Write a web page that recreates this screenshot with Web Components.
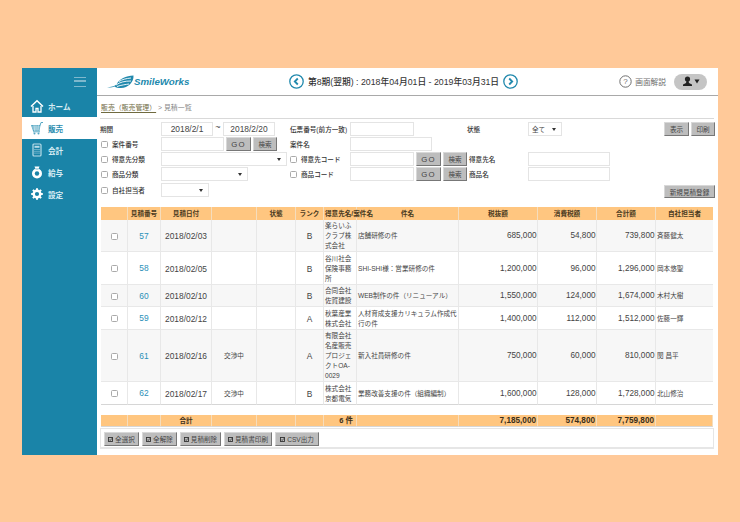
<!DOCTYPE html>
<html lang="ja"><head><meta charset="utf-8"><title>見積一覧</title>
<style>
html,body{margin:0;padding:0;height:522px;overflow:hidden;background:#ffc999;font-family:"Liberation Sans","Noto Sans CJK JP",sans-serif;color:#444}
</style></head><body>
<sw-app>
  <sw-nav slot="nav">
    <sw-nav-item icon="home">ホーム</sw-nav-item>
    <sw-nav-item icon="cart" active>販売</sw-nav-item>
    <sw-nav-item icon="calc">会計</sw-nav-item>
    <sw-nav-item icon="bag">給与</sw-nav-item>
    <sw-nav-item icon="gear">設定</sw-nav-item>
  </sw-nav>
  <sw-topbar></sw-topbar>
  <sw-crumb></sw-crumb>
  <sw-filter>
    <sw-lab>期間</sw-lab>
    <sw-group><sw-field w="52" center>2018/2/1</sw-field><span style="width:6px;text-align:center;font-size:9px">~</span><sw-field w="52" center>2018/2/20</sw-field></sw-group>
    <sw-lab style="padding-left:1px">伝票番号(前方一致)</sw-lab>
    <sw-field w="64"></sw-field>
    <sw-lab style="padding-left:0">状態</sw-lab>
    <sw-select w="34">全て</sw-select>
    <sw-group style="grid-column:7"><sw-btn w="25">表示</sw-btn><sw-btn w="24">印刷</sw-btn></sw-group>

    <sw-lab check>案件番号</sw-lab>
    <sw-group><sw-field w="63"></sw-field><sw-btn w="25" go>GO</sw-btn><sw-btn w="24">検索</sw-btn></sw-group>
    <sw-lab style="padding-left:1px">案件名</sw-lab>
    <sw-field w="82" style="grid-column:4/span 2"></sw-field>
    <div style="grid-column:6/span 2"></div>

    <sw-lab check>得意先分類</sw-lab>
    <sw-select w="126"></sw-select>
    <sw-lab check>得意先コード</sw-lab>
    <sw-group><sw-field w="64"></sw-field><sw-btn w="25" go>GO</sw-btn><sw-btn w="24">検索</sw-btn></sw-group>
    <sw-lab style="padding-left:2px">得意先名</sw-lab>
    <sw-field w="82"></sw-field>
    <div></div>

    <sw-lab check>商品分類</sw-lab>
    <sw-select w="87"></sw-select>
    <sw-lab check>商品コード</sw-lab>
    <sw-group><sw-field w="64"></sw-field><sw-btn w="25" go>GO</sw-btn><sw-btn w="24">検索</sw-btn></sw-group>
    <sw-lab style="padding-left:2px">商品名</sw-lab>
    <sw-field w="82"></sw-field>
    <div></div>

    <sw-lab check>自社担当者</sw-lab>
    <sw-select w="48"></sw-select>
    <sw-btn w="51" style="grid-column:7;margin-top:2px;height:13px">新規見積登録</sw-btn>
  </sw-filter>
  <sw-table></sw-table>
  <sw-actions>
    <sw-btn w="35" tick>全選択</sw-btn>
    <sw-btn w="35" tick>全解除</sw-btn>
    <sw-btn w="41" tick>見積削除</sw-btn>
    <sw-btn w="48" tick>見積書印刷</sw-btn>
    <sw-btn w="44" tick>CSV出力</sw-btn>
  </sw-actions>
</sw-app>
<script>
const ICONS={
home:'<path d="M1 7.500 7 1.800l6 5.700" fill="none" stroke="#fff" stroke-width="1.500"/><path d="M3 7v6h3V9.500h2V13h3V7" fill="none" stroke="#fff" stroke-width="1.300"/>',
cart:'<path d="M1 4h9.500l-1 6H3z" fill="#57a8c4"/><path d="M2 6h8M2.600 8h7M4 4l.6 6M6 4v6M8.300 4l-.4 6" stroke="#fff" stroke-width=".5"/><path d="M10 4.500 11 1.500h2M3 10.800h7" stroke="#57a8c4" stroke-width="1" fill="none"/><circle cx="4.500" cy="12.500" r="1" fill="#57a8c4"/><circle cx="8.500" cy="12.500" r="1" fill="#57a8c4"/>',
calc:'<rect x="3" y="1" width="8" height="12" rx="1" fill="none" stroke="#b9dce8" stroke-width="1.200"/><rect x="4.500" y="2.800" width="5" height="2" fill="#b9dce8"/><path d="M4.500 6.500h5M4.500 8.300h5M4.500 10.100h5" stroke="#b9dce8" stroke-width="1" stroke-dasharray="1 1"/>',
bag:'<path d="M5.500 4 4.500 1.500h5L8.500 4z" fill="#fff"/><circle cx="7" cy="8.500" r="5" fill="#fff"/><circle cx="7" cy="8.500" r="2.200" fill="#1a84a8"/><path d="M5.500 4h3" stroke="#1a84a8" stroke-width=".6"/>',
gear:'<circle cx="7" cy="7" r="3.300" fill="none" stroke="#fff" stroke-width="2.400"/><path d="M7 1.200v2M7 10.800v2M1.200 7h2M10.800 7h2M2.900 2.900l1.400 1.400M9.700 9.700l1.400 1.400M2.900 11.100l1.400-1.400M9.700 4.300l1.400-1.400" stroke="#fff" stroke-width="2"/>'
};
function def(name,build){customElements.define(name,class extends HTMLElement{connectedCallback(){if(this.shadowRoot)return;this.attachShadow({mode:'open'}).innerHTML=build(this)}})}

def('sw-app',()=>`<style>:host{display:grid;grid-template-columns:75px 621px;height:387px;margin:68px 22px 0;background:#fff}
.n{background:#1a84a8}.m{display:flex;flex-direction:column;min-width:0}</style>
<div class="n"><slot name="nav"></slot></div><div class="m"><slot></slot></div>`);

def('sw-nav',()=>`<style>:host{display:block}.b{height:27px;padding:0 11px 0 0;display:flex;justify-content:flex-end;align-items:center;box-sizing:border-box}
.h{width:12px;height:10px;border-top:1.500px solid #7fb8cd;border-bottom:1.500px solid #7fb8cd;box-sizing:border-box}
.h i{display:block;height:1.500px;background:#7fb8cd;margin-top:2.750px}</style>
<div class="b"><div class="h"><i></i></div></div><div><slot></slot></div>`);

def('sw-nav-item',e=>{const a=e.hasAttribute('active');return `<style>:host{display:flex;align-items:center;height:22px;padding-left:8px;gap:4px;font-size:7.600px;font-weight:700;color:${a?'#2b8db0':'#d8edf4'};background:${a?'#fff':'transparent'};box-sizing:border-box}</style>
<svg width="14" height="14" viewBox="0 0 14 14">${ICONS[e.getAttribute('icon')]}</svg><span><slot></slot></span>`});

def('sw-topbar',()=>`<style>:host{display:flex;align-items:center;height:28px;box-sizing:border-box;border-bottom:1px solid #a9a9a9;padding:0 11px 0 10px;flex:none}
.logo{display:flex;align-items:center;width:182px;gap:0;color:#2189ad}
.logo b{font:italic 700 9.700px "Liberation Sans",sans-serif}
.c{display:flex;align-items:center;gap:4px;font-size:8.750px;color:#333;font-weight:500;white-space:nowrap}
.r{margin-left:auto;display:flex;align-items:center;font-size:7.700px;color:#6f6f6f}
.pill{margin-left:8px;width:33px;height:16px;border-radius:8px;background:#c5c5c5;display:flex;align-items:center;justify-content:center;gap:1px}</style>
<div class="logo"><svg width="27" height="16" viewBox="0 0 27 16"><path d="M0 13C4 13 7 12.500 9.500 10.500 12 5 19 1.500 26.500 1.500 27 8 21 14 14 14 11 14 9 13.500 7.500 12.500 5 13.500 2.500 13.800 0 13Z" fill="#2189ad"/><path d="M9 11C13 8 18 7 24 7M10 12.500C14 11 19 10.500 22 10M12 7.500C15 5.500 19 4.500 24 4" stroke="#fff" stroke-width=".9" fill="none"/></svg><b>SmileWorks</b></div>
<div class="c"><svg width="15" height="15" viewBox="0 0 15 15"><circle cx="7.500" cy="7.500" r="6.700" fill="none" stroke="#2189ad" stroke-width="1.300"/><path d="M8.800 4.500 5.800 7.500l3 3" fill="none" stroke="#2189ad" stroke-width="1.800"/></svg>
<span>第8期(翌期) : 2018年04月01日 - 2019年03月31日</span>
<svg width="15" height="15" viewBox="0 0 15 15"><circle cx="7.500" cy="7.500" r="6.700" fill="none" stroke="#2189ad" stroke-width="1.300"/><path d="M6.200 4.500l3 3-3 3" fill="none" stroke="#2189ad" stroke-width="1.800"/></svg></div>
<div class="r"><svg width="13" height="13" viewBox="0 0 13 13" style="margin-right:3px"><circle cx="6.500" cy="6.500" r="5.700" fill="none" stroke="#6f6f6f" stroke-width="1"/><text x="6.500" y="9.200" font-size="8" text-anchor="middle" fill="#6f6f6f" font-family="Liberation Sans">?</text></svg>画面解説
<div class="pill"><svg width="11" height="11" viewBox="0 0 11 11"><circle cx="5.500" cy="3" r="2.600" fill="#222"/><path d="M4.500 5h2l.5 2 3 1.500V10H1V8.500L4 7z" fill="#222"/></svg><svg width="6" height="5" viewBox="0 0 6 5"><path d="M.5.500h5L3 4.500z" fill="#222"/></svg></div></div>`);

def('sw-crumb',()=>`<style>:host{display:block;flex:none;margin:0 4px 0 3px;height:23px;box-sizing:border-box;padding:7px 0 0 1px;border-bottom:1px solid #d9d9d9;font-size:6.900px;line-height:10px;color:#888;white-space:nowrap}
a{color:#6f6a3f;text-decoration:underline;text-underline-offset:1.500px}</style><a>販売（販売管理）</a> &gt; 見積一覧`);

def('sw-filter',()=>`<style>:host{display:grid;flex:none;padding:3px 0 0 3px;grid-template-columns:61px 128px 61px 117px 61px 136px 51px;grid-template-rows:15px 15px 15px 16px 15px;height:85px;box-sizing:border-box;align-items:start}</style><slot></slot>`);

def('sw-group',()=>`<style>:host{display:flex;align-items:flex-start;gap:2px}</style><slot></slot>`);

def('sw-check',()=>`<style>:host{display:block;width:7px;height:7px;box-sizing:border-box;border:1px solid #aaa;border-radius:1.500px;background:#fff;flex:none}</style>`);

def('sw-lab',e=>`<style>:host{display:flex;align-items:center;height:14px;font-size:6.600px;font-weight:500;color:#333;white-space:nowrap}
.c{margin:0 4px 0 1px}</style>${e.hasAttribute('check')?'<sw-check class="c"></sw-check>':''}<slot></slot>`);

def('sw-field',e=>`<style>:host{display:block;width:${e.getAttribute('w')}px;height:14px;box-sizing:border-box;border:1px solid #e4e4e4;background:#fff;font-size:8.400px;line-height:12px;color:#444;text-align:${e.hasAttribute('center')?'center':'left'};white-space:nowrap}</style><slot></slot>`);

def('sw-select',e=>`<style>:host{display:flex;align-items:center;justify-content:space-between;width:${e.getAttribute('w')}px;height:14px;box-sizing:border-box;border:1px solid #e4e4e4;background:#fff;padding:0 5px 0 3px;font-size:6.600px;color:#444}
svg{flex:none}</style><span><slot></slot></span><svg width="4" height="3" viewBox="0 0 4 3"><path d="M0 0h4L2 3z" fill="#333"/></svg>`);

def('sw-btn',e=>{const t=e.hasAttribute('tick'),g=e.hasAttribute('go');return `<style>:host{display:flex;align-items:center;justify-content:center;gap:2px;width:${e.getAttribute('w')}px;height:14px;box-sizing:border-box;background:#bdbdbd;border-right:1.500px solid #777;border-bottom:1.500px solid #777;border-top:1px solid #d8d8d8;border-left:1px solid #d8d8d8;font-size:${g?'7.800px':'6.600px'};${g?'letter-spacing:1.200px;':''}color:#444;white-space:nowrap;flex:none}</style>
${t?'<svg width="5" height="5" viewBox="0 0 5 5"><rect x=".5" y=".5" width="4" height="4" fill="none" stroke="#333" stroke-width=".9"/><path d="M1.200 2.500l1 1L4 1.300" fill="none" stroke="#333" stroke-width=".8"/></svg>':''}<slot></slot>`});

def('sw-actions',()=>`<style>:host{display:flex;flex:none;gap:3px;margin:1px 4px 0 3px;height:21px;box-sizing:border-box;padding:3px 0 0 3px;border:1px solid #e6e6e6;border-bottom-width:2px;background:#fff}</style><slot></slot>`);

const COLS=[27,33,51,45,39,28,33,102,79,59,59,57];
const ROWS=[
 [32,'57','2018/02/03','','','B','楽らいふクラブ株式会社','店舗研修の件','685,000','54,800','739,800','斉藤健太'],
 [33,'58','2018/02/05','','','B','谷川社会保険事務所','SHI-SHI様：営業研修の件','1,200,000','96,000','1,296,000','岡本悠聖'],
 [22,'60','2018/02/10','','','B','合同会社佐賀建設','WEB制作の件（リニューアル）','1,550,000','124,000','1,674,000','木村大樹'],
 [23,'59','2018/02/12','','','A','秋葉産業株式会社','人材育成支援カリキュラム作成代行の件','1,400,000','112,000','1,512,000','佐藤一輝'],
 [52,'61','2018/02/16','交渉中','','A','有限会社名産販売プロジェクトOA-0029','新入社員研修の件','750,000','60,000','810,000','関 昌平'],
 [23,'62','2018/02/17','交渉中','','B','株式会社京都電気','業務改善支援の件（組織編制）','1,600,000','128,000','1,728,000','北山修治']
];
def('sw-table',()=>{
 const cg='<colgroup>'+COLS.map(w=>`<col style="width:${w}px">`).join('')+'</colgroup>';
 const head=['','見積番号','見積日付','','状態','ランク','<span class="ov">得意先名/案件名</span>','件名','税抜額','消費税額','合計額','自社担当者'];
 const body=ROWS.map((r,i)=>`<tr class="${i%2?'e':'o'}" style="height:${r[0]}px"><td class="m"><sw-check style="margin:auto"></sw-check></td><td class="m"><a>${r[1]}</a></td><td class="m d">${r[2]}</td><td class="m">${r[3]}</td><td class="m">${r[4]}</td><td class="m d">${r[5]}</td><td class="t">${r[6]}</td><td class="t">${r[7]}</td><td class="n">${r[8]}</td><td class="n">${r[9]}</td><td class="n">${r[10]}</td><td class="t">${r[11]}</td></tr>`).join('');
 return `<style>:host{display:block;flex:none;margin:3px 0 0 4px;width:612px}
table{border-collapse:separate;border-spacing:0;table-layout:fixed;width:612px;font-size:6.600px;line-height:10px;color:#444}
th{background:#ffc680;height:13px;padding:0;border-right:1px solid #f5ddbd;font-weight:700;color:#4a3a20;white-space:nowrap;text-align:center;box-sizing:border-box}
th:last-child,td:last-child{border-right:0}
.ov{display:block;text-align:left;width:0;margin-left:1px}
td{padding:1px 1px 0 1px;border-right:1px solid #e8e8e8;border-bottom:1px solid #e8e8e8;box-sizing:border-box}
tr.o td{background:#f7f7f7}tr.e td{background:#fff}
tbody tr:last-child td{border-bottom:1px solid #d6d6d6}
td.m{text-align:center}td.d{font-size:8.400px}
td.t{text-align:left}
td.n{text-align:right;font-size:8.200px;padding-right:.5px}
a{color:#2b90b8;font-size:8.400px;font-weight:500}
.f{margin-top:10px}
.f td{background:#ffc680;height:12px;padding:0 1px;border-right:1px solid #f5ddbd;border-bottom:0;font-weight:700;color:#3a2e18}
.f td.n{font-size:8.200px}.f td.c{text-align:center}.f td.r{text-align:right;padding-right:3px;font-size:7.500px}</style>
<table>${cg}<thead><tr>${head.map(h=>`<th>${h}</th>`).join('')}</tr></thead><tbody>${body}</tbody></table>
<table class="f">${cg}<tr><td></td><td></td><td class="c">合計</td><td></td><td></td><td></td><td class="r">6 件</td><td></td><td class="n">7,185,000</td><td class="n">574,800</td><td class="n">7,759,800</td><td></td></tr></table>`});
</script>
</body></html>
